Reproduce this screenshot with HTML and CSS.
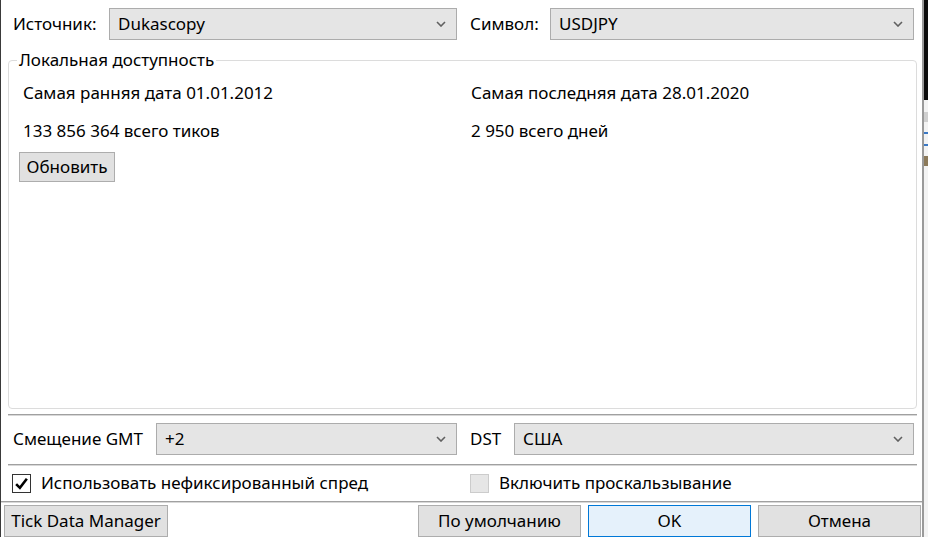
FILE: index.html
```html
<!DOCTYPE html>
<html lang="ru">
<head>
<meta charset="utf-8">
<link rel="stylesheet" href="styles.css">
</head>
<body>
<div class="screen">
  <div class="dialog">
    <div class="pair-row top-row">
      <div class="field">
        <span class="label label-src">Источник:</span>
        <div class="combo"><span>Dukascopy</span><svg class="chev" viewBox="0 0 10 6"><path d="M1 1 L5 5 L9 1" /></svg></div>
      </div>
      <div class="field">
        <span class="label label-sym">Символ:</span>
        <div class="combo"><span>USDJPY</span><svg class="chev" viewBox="0 0 10 6"><path d="M1 1 L5 5 L9 1" /></svg></div>
      </div>
    </div>

    <fieldset class="group">
      <legend>Локальная доступность</legend>
      <div class="info-grid">
        <div>Самая ранняя дата 01.01.2012</div>
        <div>Самая последняя дата 28.01.2020</div>
        <div>133 856 364 всего тиков</div>
        <div>2 950 всего дней</div>
      </div>
      <button class="btn btn-refresh">Обновить</button>
    </fieldset>

    <div class="sep sep-inset"></div>

    <div class="pair-row gmt-row">
      <div class="field">
        <span class="label label-gmt">Смещение GMT</span>
        <div class="combo"><span>+2</span><svg class="chev" viewBox="0 0 10 6"><path d="M1 1 L5 5 L9 1" /></svg></div>
      </div>
      <div class="field">
        <span class="label label-dst">DST</span>
        <div class="combo"><span>США</span><svg class="chev" viewBox="0 0 10 6"><path d="M1 1 L5 5 L9 1" /></svg></div>
      </div>
    </div>

    <div class="sep sep-inset sep-mid"></div>

    <div class="pair-row check-row">
      <label class="check">
        <span class="box checked"><svg viewBox="0 0 14 14"><path d="M2 7.5 L5.5 11 L12 2.5" /></svg></span>
        <span>Использовать нефиксированный спред</span>
      </label>
      <label class="check">
        <span class="box disabled"></span>
        <span>Включить проскальзывание</span>
      </label>
    </div>

    <div class="sep sep-full"></div>

    <div class="button-row">
      <button class="btn btn-tdm">Tick Data Manager</button>
      <div class="spacer"></div>
      <button class="btn btn-wide">По умолчанию</button>
      <button class="btn btn-wide btn-default">OK</button>
      <button class="btn btn-wide">Отмена</button>
    </div>
  </div>
  <div class="backdrop">
    <div class="bd-dark"></div>
    <div class="bd-light">
      <div class="bd-mark"></div>
      <div class="bd-blue"></div>
      <div class="bd-blue"></div>
      <div class="bd-tan"></div>
    </div>
  </div>
</div>
</body>
</html>
```

FILE: styles.css
```css
* { box-sizing: border-box; }

html, body {
  margin: 0;
  padding: 0;
  background: #ffffff;
}

body {
  font-family: "Noto Sans", "Open Sans", sans-serif;
  font-size: 17px;
  line-height: 22px;
  color: #000;
  width: 928px;
  height: 537px;
  overflow: hidden;
}

.screen {
  display: flex;
  width: 928px;
  height: 537px;
}

.dialog {
  width: 924px;
  height: 537px;
  border-left: 1px solid #3a3a3a;
  border-right: 2px solid #9a9a9a;
  display: flex;
  flex-direction: column;
  background: #fff;
}

.backdrop {
  width: 4px;
  display: flex;
  flex-direction: column;
}

.bd-dark {
  height: 100px;
  background: #0c0c0c;
}

.bd-light {
  flex: 1;
  background: #f3f3f3;
  display: flex;
  flex-direction: column;
  gap: 10px;
  padding-top: 12px;
}

.bd-mark { height: 10px; background: #cfcfcf; }
.bd-blue { height: 2px; background: #3b78c4; }
.bd-tan { height: 10px; background: #8c7a5a; }

.pair-row {
  display: grid;
  grid-template-columns: 444px 444px;
  column-gap: 13px;
  padding-left: 12px;
}

.field {
  display: flex;
  align-items: center;
}

.label { flex: none; }
.label-src { width: 96px; }
.label-sym { width: 80px; }
.label-gmt { width: 143px; }
.label-dst { width: 44px; }

.top-row {
  padding-top: 8px;
}

.combo {
  flex: 1;
  height: 32px;
  background: #e5e5e5;
  border: 1px solid #acacac;
  display: flex;
  align-items: center;
  justify-content: space-between;
  padding: 0 10px 0 8px;
}

.chev {
  width: 10px;
  height: 6px;
  fill: none;
  stroke: #606060;
  stroke-width: 1.6;
}

.group {
  margin: 10px 5px 0 7px;
  border: 1px solid #dcdcdc;
  border-radius: 4px;
  padding: 12px 10px 0 10px;
  height: 365px;
}

.group legend {
  padding: 0 2px;
  margin-left: -2px;
  line-height: 20px;
}

.info-grid {
  display: grid;
  grid-template-columns: 448px 1fr;
  row-gap: 16px;
  padding-left: 4px;
}

.btn {
  font-family: inherit;
  font-size: 17px;
  line-height: 22px;
  color: #000;
  background: #e1e1e1;
  border: 1px solid #adadad;
  padding: 0;
  height: 30px;
}

.btn-refresh {
  margin-top: 10px;
  width: 96px;
}

.sep {
  height: 2px;
  border-top: 1px solid #a0a0a0;
  border-bottom: 1px solid #d8d8d8;
}

.sep-inset {
  margin: 5px 5px 0 7px;
}

.sep-mid {
  margin-top: 0;
}

.gmt-row {
  padding-top: 7px;
  padding-bottom: 9px;
}

.check-row {
  height: 36px;
  align-items: center;
}

.check {
  display: flex;
  align-items: center;
  gap: 10px;
}

.check-row .check:first-child {
  margin-left: -1px;
}

.box {
  width: 19px;
  height: 19px;
  border: 1px solid #333;
  background: #fff;
  display: flex;
  align-items: center;
  justify-content: center;
}

.box svg {
  width: 15px;
  height: 15px;
  fill: none;
  stroke: #000;
  stroke-width: 2.4;
}

.box.disabled {
  border-color: #cccccc;
  background: #e6e6e6;
}

.button-row {
  display: flex;
  padding: 2px 1px 0 3px;
  gap: 7px;
}

.spacer { flex: 1; }

.btn-tdm {
  width: 164px;
  height: 32px;
}

.btn-wide {
  width: 163px;
  height: 32px;
}

.btn-default {
  background: #e5f1fb;
  border-color: #0078d7;
}
```
